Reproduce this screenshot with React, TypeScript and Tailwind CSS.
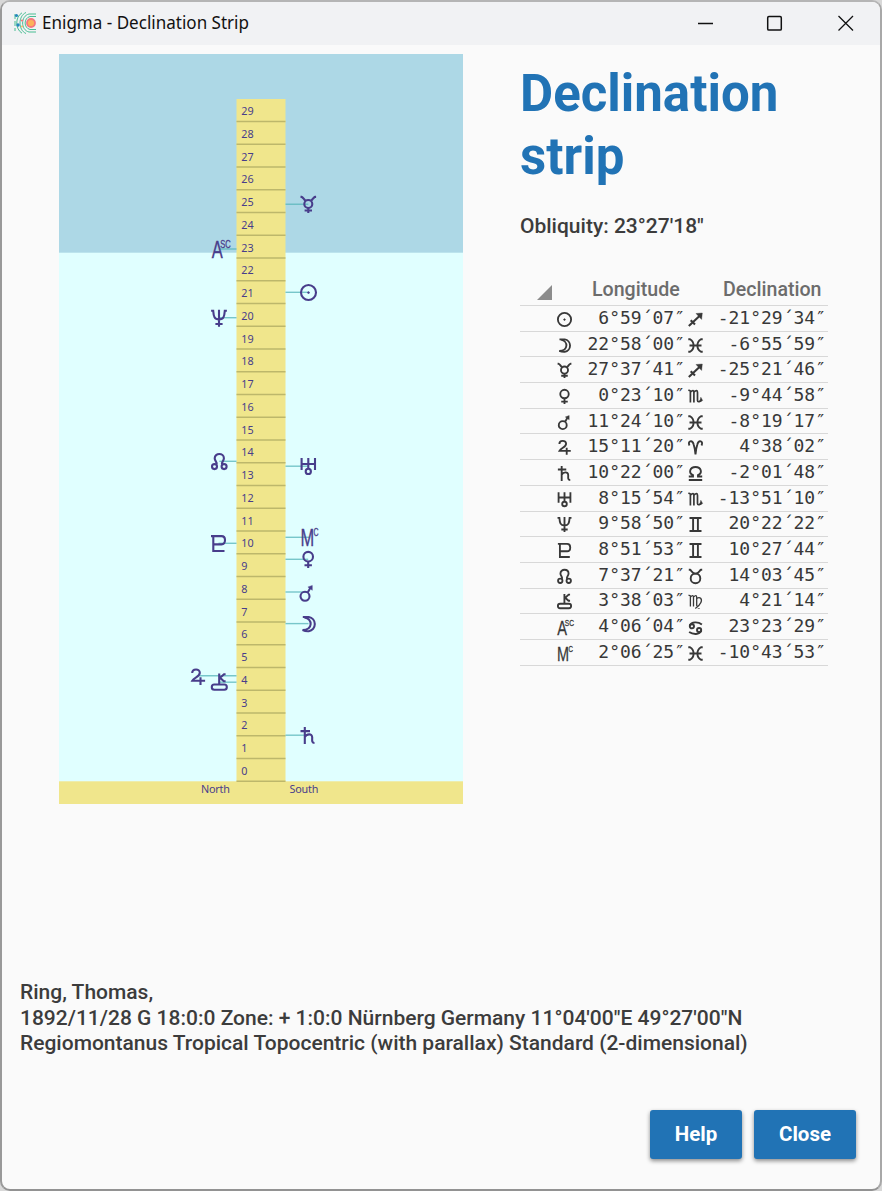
import React from "react";

type GlyphName =
  | "sun" | "moon" | "mercury" | "venus" | "mars" | "jupiter" | "saturn"
  | "uranus" | "neptune" | "pluto" | "node" | "chiron" | "asc" | "mc";

type SignName =
  | "sagittarius" | "pisces" | "scorpio" | "aries" | "libra"
  | "gemini" | "taurus" | "virgo" | "cancer";

// Planet glyphs live in a 17 x 17 box.
const bodies: Record<GlyphName, React.ReactNode> = {
  sun: (
    <>
      <circle cx="8.5" cy="8.5" r="7.5" />
      <circle cx="8.5" cy="8.6" r="0.9" fill="currentColor" strokeWidth="0.8" />
    </>
  ),
  moon: <path d="M2.800 1.500H8.800A7.200 7.200 0 0 1 8.800 15.700Q5.500 15.900 2.600 14.600C13 14.200 13 3.600 4.400 1.900" />,
  mercury: (
    <>
      <circle cx="8.500" cy="8" r="4" />
      <path d="M0.700 0.900H1.800C3.300 1.200 4 3.600 5.700 4.700M16.300 0.900H15.200C13.700 1.200 13 3.600 11.300 4.700M8.500 12V17M4.800 14.500H12.200" />
    </>
  ),
  venus: (
    <>
      <circle cx="8.500" cy="5.700" r="4.800" />
      <path d="M8.500 10.600V17M4.800 14.300H12.200" />
    </>
  ),
  mars: (
    <>
      <circle cx="6.500" cy="11.500" r="4.500" />
      <path d="M9.200 7.700L11.900 3" />
      <path d="M9.400 2.200L13.800 0.600V5.500Z" fill="currentColor" strokeWidth="0.400" />
    </>
  ),
  jupiter: <path d="M2.700 4.500C2.700 -0.100 10.300 -0.300 10.300 4.300C10.300 8.400 4.700 8.600 2.800 12.300H15.600M11 8.800V16.600" />,
  saturn: <path d="M1 4H10.500M5.300 0V17M5.300 10C7 6.800 12.700 5.800 12.700 10.500C12.700 13 12 15.900 15 15.900" />,
  uranus: (
    <>
      <path d="M1.800 0.300V12.300M15.200 0.300V12.300M1.800 6.200H15.200M8.500 0.300V11" />
      <circle cx="8.500" cy="13.600" r="2.600" />
    </>
  ),
  neptune: <path d="M0.600 1H2.700C3.200 7 3.800 9.600 8.500 9.600C13.200 9.600 13.800 7 14.300 1H16.400M8.500 0V17M4.900 14.200H12.100" />,
  pluto: <path d="M1 1H11.500Q15 1 15 5Q15 9.300 11.500 9.300H3.300M3.300 1V15.900H14.500" />,
  node: (
    <>
      <path d="M5.700 11.200C6.300 8.300 3.900 8 3.900 5.100C3.900 -0.600 13.100 -0.600 13.100 5.100C13.100 8 10.700 8.300 11.300 11.200" />
      <circle cx="3.700" cy="13.400" r="2.500" />
      <circle cx="13.300" cy="13.400" r="2.500" />
    </>
  ),
  chiron: (
    <>
      <path d="M8.400 0V11M14.800 0.700H13.200L9.300 4.200L13 7.700H14.800" />
      <rect x="1" y="11" width="15" height="5.200" rx="2.500" />
    </>
  ),
  asc: (
    <g fill="currentColor" strokeWidth="0.300" fontFamily="Liberation Sans, sans-serif">
      <text transform="translate(0.200 17) scale(0.720 1)" fontSize="23">
        A<tspan dx="-3.500" dy="-10" fontSize="10.500">SC</tspan>
      </text>
    </g>
  ),
  mc: (
    <g fill="currentColor" strokeWidth="0.300" fontFamily="Liberation Sans, sans-serif">
      <text transform="translate(0 17) scale(0.700 1)" fontSize="23.500">
        M<tspan dx="-1" dy="-10" fontSize="10">C</tspan>
      </text>
    </g>
  ),
};

// Zodiac signs live in a 15 x 15 box.
const signs: Record<SignName, React.ReactNode> = {
  sagittarius: (
    <>
      <path d="M0.800 14L11.500 4M2.700 8.300L7 12.500" strokeWidth="2.100" />
      <path d="M8 1.500L14.300 1L13.600 7.400Z" fill="currentColor" strokeWidth="0.400" />
    </>
  ),
  pisces: <path d="M0.300 1.200H2C6.800 4 6.800 11 2 13.800H0.300M14.700 1.200H13C8.200 4 8.200 11 13 13.800H14.700M1.500 7.500H13.500" />,
  scorpio: (
    <>
      <path d="M0.400 1L2.400 2V13.500M2.400 3Q5.900 0 5.900 3.500V13.500M5.900 3Q9.500 0 9.500 3.500V11.500Q9.600 14 13.300 11.500" strokeWidth="1.700" />
      <path d="M12.800 8L14.800 11.500L11.400 13.200Z" fill="currentColor" strokeWidth="0.200" />
    </>
  ),
  aries: <path d="M1.500 5.500C-0.800 1 4.200 -0.400 5.600 4.200Q7.200 9 7.500 14.500Q7.800 9 9.400 4.200C10.800 -0.400 15.800 1 13.500 5.500" />,
  libra: <path d="M0.800 10.500H5V9.200C0.200 7 1.700 1 7.500 1C13.300 1 14.800 7 10 9.200V10.500H14.200M0.800 14H14.200" />,
  gemini: <path d="M1.500 1H13.500M1.500 14H13.500M5.100 1V14M9.900 1V14" />,
  taurus: (
    <>
      <circle cx="7.500" cy="9.400" r="4.800" />
      <path d="M0.800 0.700H2C3.600 1.300 3.300 4.600 7.500 4.600C11.700 4.600 11.400 1.300 13 0.700H14.200" />
    </>
  ),
  virgo: <path d="M0.500 1L2.400 2V12.500M2.400 3Q5.500 0 5.500 3.500V12.500M5.500 3Q8.700 0 8.700 3.500V11.500Q9 13.500 11.500 14.500M8.700 4.500C12 2.200 14.500 5 12.900 8.500Q11.300 12 7.300 14.500" strokeWidth="1.300" />,
  cancer: (
    <>
      <circle cx="3.900" cy="6.300" r="2.100" />
      <circle cx="11.100" cy="10.100" r="2.100" />
      <path d="M1.700 5.600C3.500 1.500 10 1.600 13.900 4.400M13.300 10.700C11.500 15 5 14.600 1.100 12" />
    </>
  ),
};

const Body = ({ name }: { name: GlyphName }) => (
  <svg className="block h-[15px] w-[15px] overflow-visible" viewBox="0 0 17 17" fill="none" stroke="currentColor" strokeWidth="2.1">
    {bodies[name]}
  </svg>
);

const Sign = ({ name }: { name: SignName }) => (
  <svg className="block h-[15px] w-[15px] overflow-visible" viewBox="0 0 15 15" fill="none" stroke="currentColor" strokeWidth="1.9">
    {signs[name]}
  </svg>
);

interface Mark {
  name: GlyphName;
  x: number;
  y: number;
  line: number;
}

const marks: Mark[] = [
  { name: "mercury", x: 249.3, y: 150.5, line: 150.3 },
  { name: "asc", x: 161, y: 195, line: 195 },
  { name: "sun", x: 249.5, y: 238.5, line: 238.3 },
  { name: "neptune", x: 160, y: 264.3, line: 263.7 },
  { name: "node", x: 160.3, y: 407.7, line: 407.3 },
  { name: "uranus", x: 249.3, y: 412.3, line: 412.2 },
  { name: "mc", x: 250, y: 483.5, line: 483.3 },
  { name: "pluto", x: 159.5, y: 489.6, line: 489.3 },
  { name: "venus", x: 249.2, y: 505.5, line: 505.3 },
  { name: "mars", x: 248, y: 539.3, line: 538 },
  { name: "moon", x: 249.5, y: 570, line: 569.6 },
  { name: "jupiter", x: 139, y: 623, line: 621.7 },
  { name: "chiron", x: 160.3, y: 628, line: 628.2 },
  { name: "saturn", x: 249, y: 681.6, line: 681.2 },
];

const STEP = 22.75;

function Strip() {
  return (
    <svg className="block h-[750px] w-[405px]" viewBox="0 0 405 750" fontFamily="Noto Sans, Open Sans, sans-serif" fontSize="10.8" fill="#483d8b">
      <rect width="404" height="199" fill="#add8e6" />
      <rect y="198.700" width="404" height="529" fill="#e0ffff" />
      <rect y="727.300" width="404" height="22.700" fill="#f0e68c" />
      <rect x="177.500" y="45" width="49" height="683" fill="#f0e68c" />
      {Array.from({ length: 30 }, (_, i) => (
        <g key={i}>
          <line x1="177.500" x2="226.500" y1={67.500 + i * STEP} y2={67.500 + i * STEP} stroke="#bdb76b" strokeWidth="1.500" />
          <text x="182.300" y={61 + i * STEP}>{29 - i}</text>
        </g>
      ))}
      <text x="142" y="739" textLength="29">North</text>
      <text x="230.500" y="739" textLength="29">South</text>
      {marks.map((m) => (
        <g key={m.name} color="#483d8b">
          <line x1={m.x} x2={m.x < 200 ? 177.500 : 226.500} y1={m.line} y2={m.line} stroke="#5cb8bd" strokeOpacity="0.800" strokeWidth="1.400" />
          <g transform={`translate(${m.x - 8.5} ${m.y - 8.5})`} fill="none" stroke="currentColor" strokeWidth="2.100">
            {bodies[m.name]}
          </g>
        </g>
      ))}
    </svg>
  );
}

const rows: [GlyphName, string, SignName, string][] = [
  ["sun", "6°59´07″", "sagittarius", "-21°29´34″"],
  ["moon", "22°58´00″", "pisces", "-6°55´59″"],
  ["mercury", "27°37´41″", "sagittarius", "-25°21´46″"],
  ["venus", "0°23´10″", "scorpio", "-9°44´58″"],
  ["mars", "11°24´10″", "pisces", "-8°19´17″"],
  ["jupiter", "15°11´20″", "aries", "4°38´02″"],
  ["saturn", "10°22´00″", "libra", "-2°01´48″"],
  ["uranus", "8°15´54″", "scorpio", "-13°51´10″"],
  ["neptune", "9°58´50″", "gemini", "20°22´22″"],
  ["pluto", "8°51´53″", "gemini", "10°27´44″"],
  ["node", "7°37´21″", "taurus", "14°03´45″"],
  ["chiron", "3°38´03″", "virgo", "4°21´14″"],
  ["asc", "4°06´04″", "cancer", "23°23´29″"],
  ["mc", "2°06´25″", "pisces", "-10°43´53″"],
];

function PositionTable() {
  return (
    <div className="w-[308px] text-[#383838]">
      <div className="flex h-[33px] border-b border-[#d8d8d8] text-[19.6px] leading-[33px] font-medium text-[#6c6c6c]">
        <div className="flex w-[72px] items-end pb-[5px] pl-[17px]">
          <svg className="h-[15px] w-[15px]" viewBox="0 0 15 15">
            <path d="M15 0V15H0Z" fill="#8c8c8c" />
          </svg>
        </div>
        <div className="w-[131px]">Longitude</div>
        <div>Declination</div>
      </div>
      {rows.map(([body, lon, sign, dec]) => (
        <div key={body} className="flex h-[25.7px] items-center border-b border-[#d8d8d8] font-['DejaVu_Sans_Mono',monospace] text-[18px] leading-[25px]">
          <div className="w-[53px] pt-[2px] pl-[37px]"><Body name={body} /></div>
          <div className="w-[112px] pb-[2px] text-right whitespace-pre">{lon}</div>
          <div className="w-[25px] pt-[2px] pl-[3px]"><Sign name={sign} /></div>
          <div className="w-[116px] pb-[2px] text-right whitespace-pre">{dec}</div>
        </div>
      ))}
    </div>
  );
}

function Logo() {
  return (
    <svg className="h-[22px] w-[22px]" viewBox="0 0 22 22" fill="none">
      <g stroke="#35b889" strokeWidth="0.900">
        <path d="M22 4.500H16C9.500 6 9.500 16 16 17.500H22M22 2H15C6.500 4 6.500 18 15 20H22M12 0.500C4 4 4 18 12 21.500M8 0.800C1 5 1 17 8 21.200" />
        <path d="M1 2V19" strokeDasharray="5 2" />
      </g>
      <circle cx="17" cy="11" r="4" fill="#fcb259" stroke="#f4777f" strokeWidth="1.800" />
      <circle cx="2.500" cy="3.500" r="1.600" fill="#2587bd" />
      <circle cx="4" cy="13" r="1.700" fill="#2587bd" />
      <circle cx="8" cy="8.500" r="1.100" fill="#f4777f" />
      <circle cx="8" cy="14.500" r="0.900" fill="#fcb259" />
    </svg>
  );
}

export default function App() {
  return (
    <div className="h-[1191px] w-[882px] overflow-hidden bg-[#d8d8d8] font-[Roboto,sans-serif]">
      <div className="flex h-full w-full flex-col overflow-hidden rounded-[10px] border-2 border-t-[#b5b5b5] border-r-[#a8a8a8] border-b-[#929292] border-l-[#999999] bg-[#fafafa]">
        <header className="flex h-[43px] shrink-0 items-center bg-[#f1f2f4] pb-[2px] pl-3">
          <Logo />
          <svg className="ml-[6px] h-[30px] w-[220px]" viewBox="0 0 220 30">
            <text x="0" y="21" fontFamily="Noto Sans, Open Sans, sans-serif" fontSize="17.500" textLength="207" lengthAdjust="spacingAndGlyphs" fill="#111">Enigma - Declination Strip</text>
          </svg>
          <svg className="ml-auto mr-[26px] h-4 w-[156px]" viewBox="0 0 156 16" fill="none" stroke="#111" strokeWidth="1.300">
            <path d="M0 8.500H15M140.500 1L155 15.500M155 1L140.500 15.500" />
            <rect x="69.700" y="1.500" width="13.600" height="13.600" rx="1.200" strokeWidth="1.500" />
          </svg>
        </header>
        <main className="flex h-[931px] shrink-0 pt-[9px]">
          <div className="pl-[57px]"><Strip /></div>
          <section className="pl-[56px]">
            <h1 className="mt-[8px] w-[300px] text-[51px] leading-[63px] font-bold text-[#2173b5]">Declination strip</h1>
            <p className="mt-[25px] mb-[34px] text-[21px] leading-[26px] font-medium text-[#3c3c3c]">Obliquity: 23°27'18"</p>
            <PositionTable />
          </section>
        </main>
        <div className="pt-[4px] pl-[18px] text-[21px] leading-[25.500px] font-medium whitespace-nowrap text-[#3c3c3c]">
          <p>Ring, Thomas,</p>
          <p>1892/11/28 G 18:0:0 Zone: + 1:0:0 Nürnberg Germany 11°04'00"E 49°27'00"N</p>
          <p>Regiomontanus Tropical Topocentric (with parallax) Standard (2-dimensional)</p>
        </div>
        <div className="mt-auto mr-[24px] mb-[30px] flex justify-end gap-3 text-[20.500px] font-bold text-white">
          <button className="h-[49px] w-[92px] rounded-[3px] bg-[#2173b5] shadow-[0_2px_4px_rgba(0,0,0,0.450)]">Help</button>
          <button className="h-[49px] w-[102px] rounded-[3px] bg-[#2173b5] shadow-[0_2px_4px_rgba(0,0,0,0.450)]">Close</button>
        </div>
      </div>
    </div>
  );
}
